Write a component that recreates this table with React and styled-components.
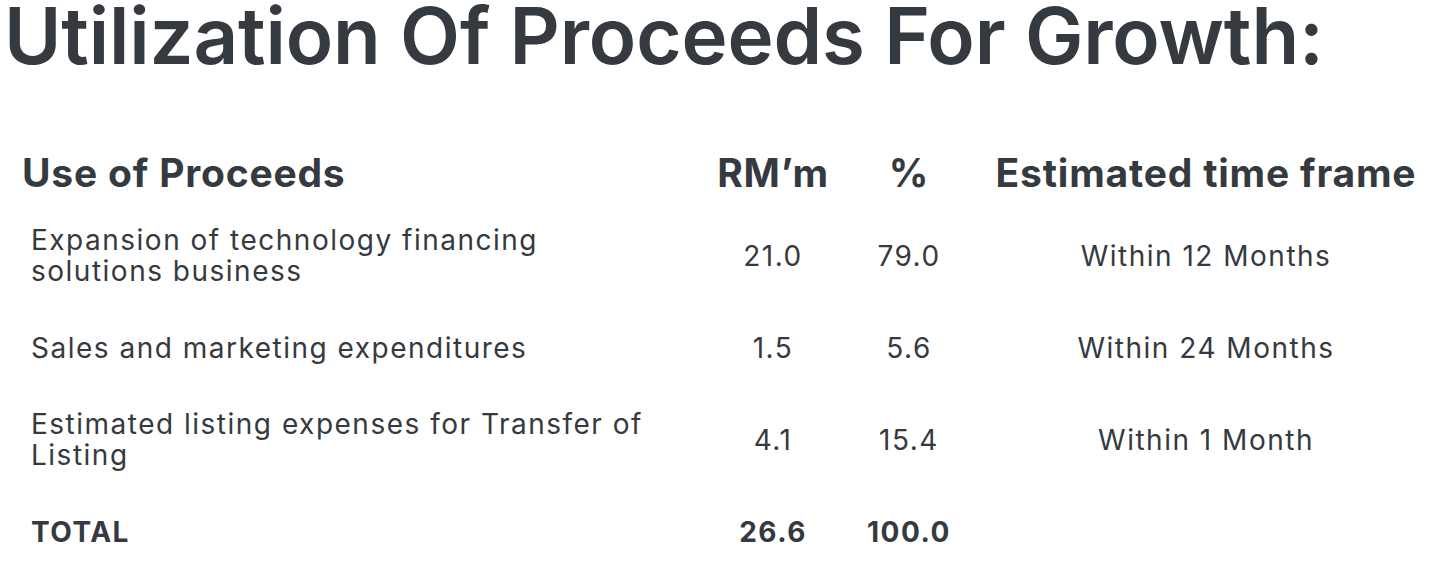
import React from "react";
import styled, { createGlobalStyle } from "styled-components";

const GlobalStyle = createGlobalStyle`
  body {
    margin: 0;
    background: #fff;
    font-family: "Inter", "Liberation Sans", sans-serif;
    color: #353a40;
  }
`;

const Page = styled.div`
  width: 1441px;
  height: 570px;
  overflow: hidden;
  padding: 0 0 0 4px;
  box-sizing: border-box;
`;

const Title = styled.h1`
  margin: -11px 0 0;
  font-size: 78px;
  line-height: 94px;
  font-weight: 600;
  letter-spacing: -0.15px;
  white-space: nowrap;
`;

const Table = styled.div`
  display: grid;
  grid-template-columns: 680px 142px 130px 464px;
  margin: 53px 0 0 18px;
`;

const Cell = styled.div`
  display: flex;
  align-items: center;
  justify-content: ${(p) => (p.$left ? "flex-start" : "center")};
  text-align: ${(p) => (p.$left ? "left" : "center")};
  height: ${(p) => p.$h}px;
  padding-left: ${(p) => (p.$left && !p.$head ? 9 : 0)}px;
  font-size: ${(p) => (p.$head ? 39 : 28)}px;
  line-height: ${(p) => (p.$head ? 44 : 31)}px;
  font-weight: ${(p) => (p.$head || p.$bold ? 700 : 400)};
  white-space: ${(p) => (p.$wrap ? "normal" : "nowrap")};
  letter-spacing: ${(p) => (p.$head ? "0.8px" : "1.5px")};
`;

const Label = styled.span`
  max-width: 625px;
`;

const rows = [
  {
    label: "Expansion of technology financing solutions business",
    rm: "21.0",
    pct: "79.0",
    time: "Within 12 Months",
  },
  {
    label: "Sales and marketing expenditures",
    rm: "1.5",
    pct: "5.6",
    time: "Within 24 Months",
  },
  {
    label: "Estimated listing expenses for Transfer of Listing",
    rm: "4.1",
    pct: "15.4",
    time: "Within 1 Month",
  },
];

export default function App() {
  return (
    <Page>
      <GlobalStyle />
      <Title>Utilization Of Proceeds For Growth:</Title>
      <Table>
        <Cell $left $head $h={74}>
          Use of Proceeds
        </Cell>
        <Cell $head $h={74}>RM’m</Cell>
        <Cell $head $h={74}>%</Cell>
        <Cell $head $h={74}>Estimated time frame</Cell>
        {rows.map((r) => (
          <React.Fragment key={r.label}>
            <Cell $left $wrap $h={92}>
              <Label>{r.label}</Label>
            </Cell>
            <Cell $h={92}>{r.rm}</Cell>
            <Cell $h={92}>{r.pct}</Cell>
            <Cell $h={92}>{r.time}</Cell>
          </React.Fragment>
        ))}
        <Cell $left $bold $h={92}>
          TOTAL
        </Cell>
        <Cell $bold $h={92}>26.6</Cell>
        <Cell $bold $h={92}>100.0</Cell>
        <Cell $h={92} />
      </Table>
    </Page>
  );
}
